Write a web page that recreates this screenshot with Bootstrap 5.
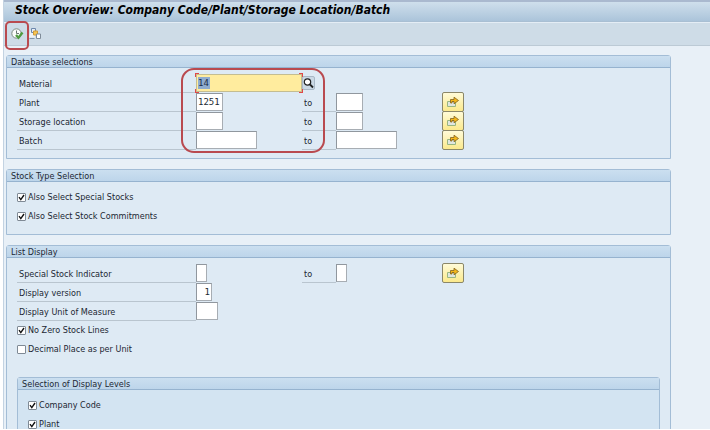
<!DOCTYPE html>
<html lang="en">
<head>
<meta charset="utf-8">
<meta name="viewport" content="width=device-width, initial-scale=1">
<title>Stock Overview</title>
<link href="https://cdn.jsdelivr.net/npm/bootstrap@5.3.0/dist/css/bootstrap.min.css" rel="stylesheet">
<style>
body { font-family: "DejaVu Sans Condensed", "DejaVu Sans", sans-serif; font-size: 9px; line-height: 13px; color: #1c2733; background: #fff; }
.sap-window { margin-left: 3px; border-left: 1px solid #c3d3e2; background: #e8f0f7; height: calc(100vh - 1px); }
.sap-title { height: 22px; padding-left: 11px; border-top: 2px solid #aab9cf; border-bottom: 1px solid #a9bfd3; background: linear-gradient(#cfdfec, #abc4da); font-size: 12px; line-height: 17px; font-weight: bold; font-style: italic; color: #000; }
.sap-tools { height: 24px; padding-left: 7px; gap: 5px; border-top: 1px solid #e4edf5; border-bottom: 1px solid #bccad5; background: #cedce7; }
.sap-tools button, .btn-more, .btn-find { padding: 0; line-height: 0; }
.sap-tools button { border: 0; background: none; }
.sap-body { padding: 9px 39px 0 2px; }
.sap-group { margin-bottom: 10px; border: 1px solid #a3bdd6; border-radius: 3px 3px 0 0; background: #deeaf4; padding-bottom: 8px; }
.sap-group h2 { margin: 0; height: 12px; padding-left: 4px; border-bottom: 1px solid #96b3cf; background: linear-gradient(#cbdff0, #bdd5ea); font-size: 9px; line-height: 12px; font-weight: normal; }
.sap-rows { padding: 6px 10px 0 10px; }
.sap-line { display: grid; grid-template-columns: 179px 106px 34px 106px 22px; height: 19px; }
.caption { border-bottom: 1px solid #b9c5cf; padding: 3px 0 0 2px; line-height: 15px; }
.sap-line input { display: block; height: 18px; border: 1px solid #a7adb3; border-top-color: #90979e; border-left-color: #90979e; border-radius: 0; background: #fff; padding: 0 1px; font: 9px/14px "DejaVu Sans Mono", monospace; color: #222a33; }
.w1 { width: 11px; } .w2 { width: 16px; } .w3 { width: 22px; } .w4 { width: 27px; } .w10 { width: 61px; }
.sap-line .focused input { width: 100%; background: #ffec9e; border-color: #c4bd91; color: transparent; }
.picked { left: 2px; top: 3px; padding-right: 1px; height: 12px; background: #8facce; color: #1b2e4b; font: 9px/12px "DejaVu Sans Mono", monospace; pointer-events: none; }
.corners { inset: -1px -1px 0 -1px; pointer-events: none; }
.corners i { position: absolute; width: 4px; height: 4px; border: 0 solid #e04848; }
.corners i:nth-child(1) { left: 0; top: 0; border-width: 1px 0 0 1px; }
.corners i:nth-child(2) { right: 0; top: 0; border-width: 1px 1px 0 0; }
.corners i:nth-child(3) { left: 0; bottom: 0; border-width: 0 0 1px 1px; }
.corners i:nth-child(4) { right: 0; bottom: 0; border-width: 0 1px 1px 0; }
.btn-find { width: 13px; height: 14px; margin: 2px 0 0 0; border: 1px solid #a9b8c6; border-radius: 2px; background: #cbd9e5; }
.btn-more { width: 22px; height: 20px; margin-top: -1px; border: 1px solid #8b8768; border-radius: 2px; background: linear-gradient(#fffbd8, #fbe98c); }
.sap-check { height: 19px; gap: 2px; }
.sap-check input { appearance: none; margin: 0; width: 9px; height: 9px; border: 1px solid #7f8a95; border-radius: 1px; background: #fff; flex: none; }
.sap-check input:checked { background: #fff url("data:image/svg+xml,%3Csvg xmlns='http://www.w3.org/2000/svg' viewBox='0 0 7 7'%3E%3Cpath d='M1 3.2 2.8 5.6 6 1' fill='none' stroke='%23111' stroke-width='1.4'/%3E%3C/svg%3E") center/7px no-repeat; }
.sap-inner { margin: 18px 0 0 0; background: #d3e4f2; }
.ring { border: 2px solid #b94a4f; pointer-events: none; }
.ring-run { left: -6px; top: -7px; width: 24px; height: 29px; border-radius: 5px; }
.ring-fields { left: 174px; top: 12px; width: 144px; height: 85px; border-radius: 13px; }
</style>
<script src="https://cdn.jsdelivr.net/npm/bootstrap@5.3.0/dist/js/bootstrap.bundle.min.js" defer></script>
</head>
<body class="overflow-hidden">
<svg class="d-none" aria-hidden="true">
  <symbol id="more" viewBox="0 0 12 12"><path d="M.5 5.5h8v5h-8z" fill="#e0e6df" stroke="#98b681"/><path d="M3.5 7V3.5H7V1.2L11.5 4.5 7 7.8V5.5H5V7z" fill="#f2b61b" stroke="#80601e" stroke-width=".8"/></symbol>
</svg>
<div class="sap-window overflow-hidden">
  <h1 class="sap-title mb-0 text-nowrap">Stock Overview: Company Code/Plant/Storage Location/Batch</h1>
  <div class="sap-tools d-flex align-items-center" role="toolbar" aria-label="Application toolbar">
    <div class="position-relative">
      <button type="button" class="d-block" aria-label="Execute"><svg width="13" height="13" viewBox="0 0 13 13"><circle cx="5.5" cy="5.5" r="4.7" fill="#fafcfa" stroke="#7d8a83"/><path d="M5.5 2.5v3H8" fill="none" stroke="#68766e"/><path d="M5 7 7.5 9.7 11.5 4.5" fill="none" stroke="#4f9c40" stroke-width="2.4"/></svg></button>
      <span class="ring ring-run position-absolute"></span>
    </div>
    <button type="button" class="d-block" aria-label="Get variant"><svg width="13" height="12" viewBox="0 0 13 12"><path d="M0 9.5h6V2H1.5z" fill="#edf2f6"/><path d="M.5 10.5h5" stroke="#8094aa"/><path d="M2.5.5h4v4h-4z" fill="#e6edf5" stroke="#6d87ac"/><path d="M4.5 3h4v4h-4z" fill="#f7c552" stroke="#d19b36"/><path d="M7.5 6h4v4.500h-4z" fill="#fff" stroke="#7f8c99"/></svg></button>
  </div>
  <main class="sap-body">
    <section class="sap-group position-relative">
      <h2>Database selections</h2>
      <div class="sap-rows">
        <div class="sap-line"><label class="caption" for="mat">Material</label>
          <div class="focused position-relative"><input id="mat" value="14"><span class="picked position-absolute" aria-hidden="true">14</span><span class="corners position-absolute"><i></i><i></i><i></i><i></i></span></div>
          <button type="button" class="btn-find" aria-label="Search material"><svg width="11" height="12" viewBox="0 0 11 12"><circle cx="4.5" cy="5" r="3.2" fill="#fff" stroke="#222" stroke-width="1.2"/><path d="m7 7.5 3 3" stroke="#222" stroke-width="1.8"/></svg></button></div>
        <div class="sap-line"><label class="caption" for="plant">Plant</label><div><input id="plant" class="w4" value="1251"></div><label class="caption" for="plant2">to</label><div><input id="plant2" class="w4"></div><button type="button" class="btn-more" aria-label="Multiple plants"><svg width="12" height="12"><use href="#more"/></svg></button></div>
        <div class="sap-line"><label class="caption" for="loc">Storage location</label><div><input id="loc" class="w4"></div><label class="caption" for="loc2">to</label><div><input id="loc2" class="w4"></div><button type="button" class="btn-more" aria-label="Multiple storage locations"><svg width="12" height="12"><use href="#more"/></svg></button></div>
        <div class="sap-line"><label class="caption" for="batch">Batch</label><div><input id="batch" class="w10"></div><label class="caption" for="batch2">to</label><div><input id="batch2" class="w10"></div><button type="button" class="btn-more" aria-label="Multiple batches"><svg width="12" height="12"><use href="#more"/></svg></button></div>
      </div>
      <span class="ring ring-fields position-absolute"></span>
    </section>
    <section class="sap-group">
      <h2>Stock Type Selection</h2>
      <div class="sap-rows">
        <label class="sap-check d-flex align-items-center"><input type="checkbox" checked>Also Select Special Stocks</label>
        <label class="sap-check d-flex align-items-center"><input type="checkbox" checked>Also Select Stock Commitments</label>
      </div>
    </section>
    <section class="sap-group">
      <h2>List Display</h2>
      <div class="sap-rows">
        <div class="sap-line"><label class="caption" for="ind">Special Stock Indicator</label><div><input id="ind" class="w1"></div><label class="caption" for="ind2">to</label><div><input id="ind2" class="w1"></div><button type="button" class="btn-more" aria-label="Multiple indicators"><svg width="12" height="12"><use href="#more"/></svg></button></div>
        <div class="sap-line"><label class="caption" for="ver">Display version</label><div><input id="ver" class="w2 text-end" value="1"></div></div>
        <div class="sap-line"><label class="caption" for="unit">Display Unit of Measure</label><div><input id="unit" class="w3"></div></div>
        <label class="sap-check d-flex align-items-center"><input type="checkbox" checked>No Zero Stock Lines</label>
        <label class="sap-check d-flex align-items-center"><input type="checkbox">Decimal Place as per Unit</label>
        <section class="sap-group sap-inner">
          <h2>Selection of Display Levels</h2>
          <div class="sap-rows">
            <label class="sap-check d-flex align-items-center"><input type="checkbox" checked>Company Code</label>
            <label class="sap-check d-flex align-items-center"><input type="checkbox" checked>Plant</label>
          </div>
        </section>
      </div>
    </section>
  </main>
</div>
</body>
</html>
